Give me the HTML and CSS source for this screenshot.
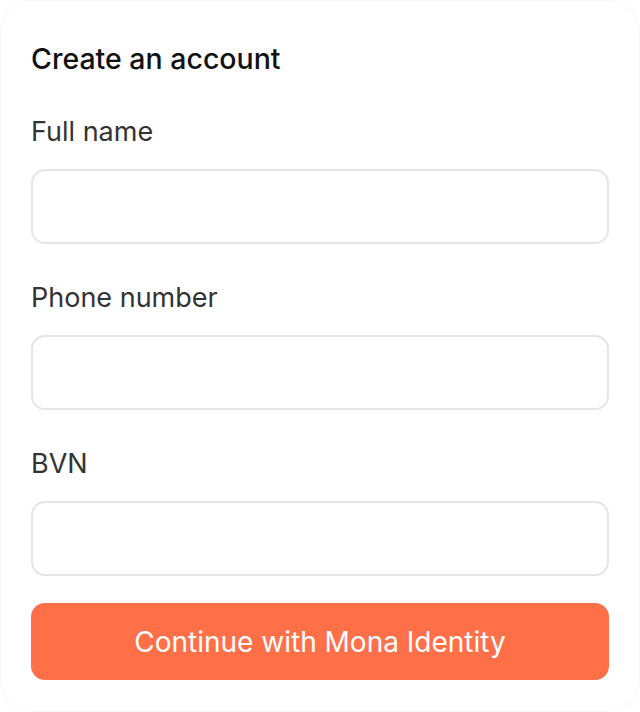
FILE: index.html
```html
<!DOCTYPE html>
<html lang="en">
<head>
<meta charset="utf-8">
<title>Create an account</title>
<link rel="stylesheet" href="styles.css">
</head>
<body>
<form class="card">
  <h1 class="title">Create an account</h1>
  <div class="field">
    <label class="label" for="name">Full name</label>
    <input class="input" id="name" type="text">
  </div>
  <div class="field">
    <label class="label" for="phone">Phone number</label>
    <input class="input" id="phone" type="tel">
  </div>
  <div class="field">
    <label class="label" for="bvn">BVN</label>
    <input class="input" id="bvn" type="text">
  </div>
  <button class="btn" type="button">Continue with Mona Identity</button>
</form>
</body>
</html>
```
FILE: styles.css
```css
* { box-sizing: border-box; }
html, body { margin: 0; padding: 0; background: #fff; }
body { width: 640px; height: 712px; font-family: Inter, "Noto Sans", sans-serif; }
.card {
  width: 640px;
  height: 712px;
  border: 1px dotted #ededed;
  border-radius: 32px;
  padding: 40px 30px 0 30px;
  display: flex;
  flex-direction: column;
}
.title {
  flex: none;
  margin: 0;
  font-size: 28.5px;
  line-height: 36px;
  font-weight: 500;
  color: #111;
}
.field {
  flex: none;
  display: flex;
  flex-direction: column;
  gap: 21px;
  margin-top: 39px;
}
.field + .field { margin-top: 38px; }
.label {
  flex: none;
  display: block;
  height: 32px;
  font-size: 27px;
  line-height: 32px;
  color: #333;
}
.input {
  flex: none;
  display: block;
  width: 100%;
  height: 75px;
  margin: 0;
  padding: 0 16px;
  border: 2px solid #e5e5e5;
  border-radius: 14px;
  background: #fff;
  font: inherit;
  outline: none;
}
.btn {
  flex: none;
  margin-top: 27px;
  height: 77px;
  border: none;
  border-radius: 14px;
  background: #ff7049;
  color: #fff;
  font-family: Inter, "Noto Sans", sans-serif;
  font-size: 28px;
  font-weight: 400;
}
```
